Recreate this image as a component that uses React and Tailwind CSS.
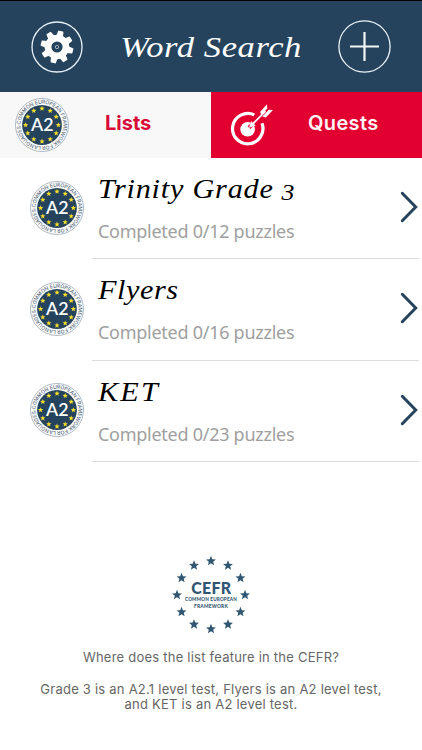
import React, { useId } from "react";

// Word lists
const listsData = [
  { title: "Trinity Grade", digit: "3", total: 12, tracking: "tracking-[0.7px]" },
  { title: "Flyers", total: 16, tracking: "tracking-[0.5px]" },
  { title: "KET", total: 23, tracking: "tracking-[1.9px]" },
];

const starPoints = (cx, cy, r) =>
  Array.from({ length: 10 }, (_, i) => {
    const radius = i % 2 ? r * 0.44 : r;
    const a = (i * Math.PI) / 5;
    return `${(cx + radius * Math.sin(a)).toFixed(2)},${(cy - radius * Math.cos(a)).toFixed(2)}`;
  }).join(" ");

// Twelve upright stars on a circle
const StarRing = ({ cx, cy, radius, size, fill }) =>
  Array.from({ length: 12 }, (_, i) => {
    const a = (i * Math.PI) / 6;
    return (
      <polygon
        key={i}
        fill={fill}
        points={starPoints(
          cx + radius * Math.sin(a),
          cy - radius * Math.cos(a),
          size
        )}
      />
    );
  });

const LevelBadge = () => {
  const id = useId();
  return (
    <svg className="size-[54px] shrink-0" viewBox="0 0 54 54">
      <circle cx="27" cy="27" r="26.5" fill="#fff" stroke="#8b9bab" strokeWidth="0.7" />
      <circle cx="27" cy="27" r="19.9" fill="#25435d" />
      <path id={id} d="M5.7 27a21.3 21.3 0 0 1 42.6 0a21.3 21.3 0 0 1-42.6 0" fill="none" />
      <text fontFamily="Inter, sans-serif" fontSize="5.2" fontWeight="500" fill="#5a6d80">
        <textPath href={`#${id}`} textLength="133" startOffset="0.5">
          COMMON EUROPEAN FRAMEWORK FOR LANGUAGES·
        </textPath>
      </text>
      <StarRing cx={27} cy={27} radius={16.4} size={2.8} fill="#f4dc2c" />
      <text
        x="27.3"
        y="33"
        textAnchor="middle"
        textLength="22.5"
        lengthAdjust="spacingAndGlyphs"
        fontFamily="Lato, sans-serif"
        fontSize="17.5"
        fontWeight="600"
        fill="#fff"
      >
        A2
      </text>
    </svg>
  );
};

const GearIcon = () => (
  <svg className="size-[52px]" viewBox="0 0 52 52" fill="none">
    <circle cx="26" cy="26" r="25" stroke="#e8f1f8" strokeWidth="1.3" />
    <g fill="#fff" transform="rotate(14 26 26)">
      {[0, 45, 90, 135, 180, 225, 270, 315].map((deg) => (
        <path
          key={deg}
          transform={`rotate(${deg} 26 26)`}
          d="M22.6 15 23.3 10.3Q23.4 9.6 24.1 9.6H27.9Q28.6 9.6 28.7 10.3L29.4 15Z"
        />
      ))}
      <circle cx="26" cy="26" r="12.3" />
    </g>
    <circle cx="26" cy="26" r="5.6" fill="#25435d" />
    <circle cx="26" cy="26" r="1.7" stroke="#a9bccb" strokeWidth="0.9" />
  </svg>
);

const PlusIcon = () => (
  <svg className="size-[53px]" viewBox="0 0 53 53" fill="none">
    <circle cx="26.5" cy="26.5" r="25.6" stroke="#e8f1f8" strokeWidth="1.3" />
    <path d="M26.5 12v29M12 26.5h29" stroke="#f3f8f6" strokeWidth="2.2" />
  </svg>
);

const TargetIcon = () => (
  <svg className="w-[44px] h-[46px]" viewBox="0 0 44 46" fill="none">
    {/* Outer ring, open towards the arrow */}
    <path
      d="M24.3 12.9A15.2 15.2 0 1 0 32 21.3"
      stroke="#fff"
      strokeWidth="3.2"
    />
    <circle cx="17.6" cy="27.3" r="7.3" fill="#fff" />
    {/* Arrow */}
    <path d="M19 25.7 35 9.7" stroke="#e20031" strokeWidth="3.8" />
    <path d="M20.5 24.2 35.5 9.2" stroke="#fff" strokeWidth="1.8" />
    <path d="M19 25.7 21.2 19.2 25.6 23.5Z" fill="#fff" />
    <path
      d="M30.2 9.8 37 2.2 37.3 6.4 31.2 13.2ZM32.4 14.6 38.8 7.8 43 8 35.8 15.4Z"
      fill="#fff"
    />
  </svg>
);

const ListRow = ({ list }) => (
  <div className="flex h-[101.4px] pl-[30px]">
    <div className="pt-[22.5px]">
      <LevelBadge />
    </div>
    <div className="ml-2 mr-[3px] flex flex-1 border-b border-[#dcdcdc] pl-1.5">
      <div className="flex-1 whitespace-nowrap">
        <h2
          className={`origin-left scale-x-[1.12] pt-[15px] font-['Liberation_Serif',serif] text-[27px] leading-8 italic text-black ${list.tracking}`}
        >
          {list.title}
          {list.digit && (
            <span className="inline-block translate-y-[2px] pl-[7px] text-[23px] leading-none">
              {list.digit}
            </span>
          )}
        </h2>
        <p className="pt-[14px] font-['Noto_Sans',sans-serif] text-[18px] leading-6 tracking-[-0.27px] text-[#a0a0a0]">
          Completed 0/{list.total} puzzles
        </p>
      </div>
      <svg className="mt-[33px] h-[32px] w-[19px]" viewBox="0 0 19 32" fill="none">
        <path d="M2.3 2.3 15.7 16 2.3 29.7" stroke="#25435d" strokeWidth="3" strokeLinecap="round" />
      </svg>
    </div>
  </div>
);

const CefrLogo = () => (
  <svg className="size-[80px]" viewBox="0 0 80 80">
    <StarRing cx={40} cy={40} radius={34} size={5.2} fill="#315672" />
    <g
      fill="#315672"
      textAnchor="middle"
      fontFamily="Lato, sans-serif"
      fontWeight="900"
    >
      <text x="40.3" y="39.2" fontSize="17" textLength="40" lengthAdjust="spacingAndGlyphs">
        CEFR
      </text>
      <text x="40" y="46.1" fontSize="5.6" textLength="52" lengthAdjust="spacingAndGlyphs">
        COMMON EUROPEAN
      </text>
      <text x="40" y="52.8" fontSize="5.5" textLength="34" lengthAdjust="spacingAndGlyphs">
        FRAMEWORK
      </text>
    </g>
  </svg>
);

const App = () => {
  return (
    <div className="flex h-[750px] w-[422px] flex-col overflow-hidden bg-white">
      {/* Header */}
      <header className="flex h-[92px] items-center justify-between border-t border-black bg-[#25435d] pl-[31px] pr-[31px]">
        <GearIcon />
        <h1 className="scale-x-[1.15] whitespace-nowrap font-['Liberation_Serif',serif] text-[30px] leading-9 italic tracking-[0.5px] text-white">
          Word Search
        </h1>
        <PlusIcon />
      </header>

      {/* Tabs */}
      <nav className="grid h-[66px] grid-cols-2 font-['Inter',sans-serif] text-[20px]">
        <div className="flex items-center bg-[#f8f8f8] pl-[15px] text-[#d80b38]">
          <LevelBadge />
          <span className="-mt-1 ml-[36px] font-bold">Lists</span>
        </div>
        <div className="flex items-center bg-[#e20031] pl-[19px] text-[#fff2f4]">
          <TargetIcon />
          <span className="-mt-1 ml-[34px] font-semibold tracking-[0.35px]">
            Quests
          </span>
        </div>
      </nav>

      {/* Lists */}
      <main>
        {listsData.map((list) => (
          <ListRow key={list.title} list={list} />
        ))}
      </main>

      {/* Footer */}
      <footer className="flex flex-col items-center pt-[93px] text-center font-['Inter',sans-serif] text-[13px] leading-[15.7px] tracking-[0.23px] text-[#666]">
        <CefrLogo />
        <p className="mt-[15px] whitespace-nowrap">
          Where does the list feature in the CEFR?
        </p>
        <p className="mt-[15.7px] whitespace-nowrap">
          Grade 3 is an A2.1 level test, Flyers is an A2 level test,
          <br />
          and KET is an A2 level test.
        </p>
      </footer>
    </div>
  );
};

export default App;
